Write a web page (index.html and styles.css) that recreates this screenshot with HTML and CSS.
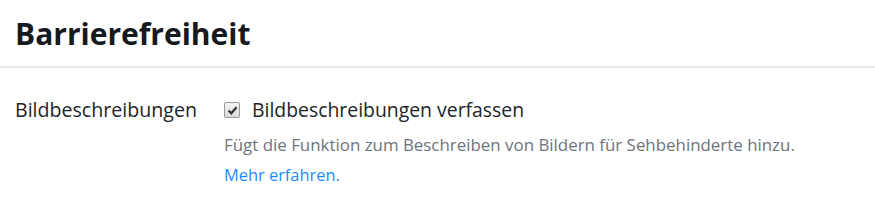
FILE: index.html
```html
<!DOCTYPE html>
<html lang="de">
<head>
  <meta charset="UTF-8">
  <meta name="viewport" content="width=device-width, initial-scale=1.0">
  <title>Barrierefreiheit</title>
  <link rel="stylesheet" href="styles.css">
</head>
<body>
  <div class="page">
    <h1 class="title">Barrierefreiheit</h1>
    <div class="setting">
      <div class="label">Bildbeschreibungen</div>
      <div class="control">
        <label class="check">
          <span class="box">
            <svg width="11" height="11" viewBox="0 0 11 11"><path d="M1.5 5.5 L4.3 8.3 L9.6 2.2" fill="none" stroke="#333" stroke-width="2.2"/></svg>
          </span>
          Bildbeschreibungen verfassen
        </label>
        <p class="hint">Fügt die Funktion zum Beschreiben von Bildern für Sehbehinderte hinzu.</p>
        <a class="more" href="#">Mehr erfahren.</a>
      </div>
    </div>
  </div>
</body>
</html>
```

FILE: styles.css
```css
body {
  margin: 0;
  background: #fff;
  font-family: "Open Sans", "Noto Sans", sans-serif;
  color: #222;
}
.page {
  width: 875px;
}
.title {
  margin: 0;
  padding: 14px 15px 12px;
  font-size: 30px;
  font-weight: 700;
  color: #16191d;
  border-bottom: 2px solid #e6eaee;
  line-height: 40px;
}
.setting {
  display: flex;
  padding: 28px 15px 0;
}
.label {
  width: 209px;
  font-size: 19.6px;
  line-height: 28px;
  color: #212529;
}
.control {
  display: flex;
  flex-direction: column;
}
.check {
  display: flex;
  align-items: center;
  gap: 12px;
  font-size: 19.4px;
  line-height: 28px;
  color: #212529;
}
.box {
  width: 14px;
  height: 14px;
  border: 1px solid #9a9a9a;
  border-radius: 2px;
  background: linear-gradient(#f4f4f4, #dcdcdc);
  display: flex;
  align-items: center;
  justify-content: center;
}
.hint {
  margin: 10px 0 0;
  font-size: 16.9px;
  line-height: 22px;
  color: #6c757d;
}
.more {
  margin-top: 8px;
  font-size: 16.4px;
  line-height: 22px;
  color: #1a8cff;
  text-decoration: none;
}
```
